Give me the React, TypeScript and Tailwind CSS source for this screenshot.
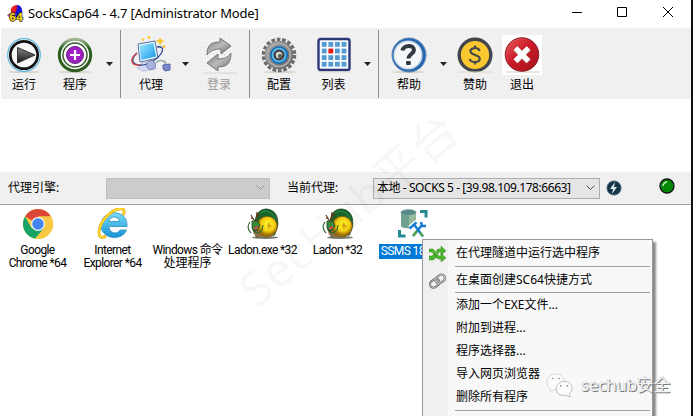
import type { ReactNode } from 'react';

const sans = "font-['Noto_Sans','Noto_Sans_CJK_SC',sans-serif]";
const narrow = "font-['Roboto','Noto_Sans_CJK_SC',sans-serif]";

function AppLogo() {
  return (
    <svg width="18" height="18" viewBox="0 0 18 18">
      <path d="M4 7C3 2 7 0 10 0v9H4Z" fill="#e91d1d" />
      <path d="M10 0c4 0 6 4 5 9l-3 6-6-6c3-1 4-4 4-9Z" fill="#1515d8" />
      <path d="M0 10 5 7l3 3-3 5Z" fill="#a04aa8" />
      <text x="2.5" y="15.5" fontSize="11" fontWeight="bold" fill="#f8dc16" stroke="#342d16" strokeWidth="1.4" paintOrder="stroke" fontFamily="Liberation Sans" textLength="13">64</text>
    </svg>
  );
}

function RunIcon() {
  return (
    <svg width="40" height="40" viewBox="0 0 40 40">
      <defs><linearGradient id="run" x2="0" y2="1"><stop stopColor="#888" /><stop offset="1" stopColor="#151515" /></linearGradient></defs>
      <ellipse cx="20" cy="37" rx="17" ry="1" fill="#d6d4c9" />
      <circle cx="20" cy="20" r="16.3" fill="#f4fbff" stroke="#65b5dc" strokeWidth="1.2" />
      <circle cx="20" cy="20" r="13.7" fill="#f8f8f8" stroke="#111" strokeWidth="2.7" />
      <path d="M13.5 12.5v15.5L31 20Z" fill="url(#run)" stroke="#333" />
    </svg>
  );
}

function AddIcon() {
  return (
    <svg width="40" height="40" viewBox="0 0 40 40">
      <defs><linearGradient id="green" x2="0" y2="1"><stop stopColor="#a3b795" /><stop offset=".3" stopColor="#245f16" /><stop offset="1" stopColor="#2d5d22" /></linearGradient></defs>
      <ellipse cx="20" cy="37" rx="17" ry="1" fill="#d6d4c9" />
      <circle cx="20" cy="20" r="15.7" fill="#fff" stroke="url(#green)" strokeWidth="3" />
      <circle cx="20" cy="20" r="12" fill="#fff" stroke="#355b2d" strokeWidth="1.5" />
      <circle cx="20" cy="20" r="8.5" fill="#9e20c4" stroke="#64207d" />
      <path d="M20 15v10m-5-5h10" stroke="#fff" strokeWidth="2.2" />
    </svg>
  );
}

function ProxyIcon() {
  return (
    <svg width="42" height="40" viewBox="0 0 42 40">
      <defs><linearGradient id="screen" x2="1" y2="1"><stop stopColor="#9de9ff" /><stop offset="1" stopColor="#1598e8" /></linearGradient></defs>
      <path d="m7 33 6-6 11 1 2 6-13 2Z" fill="#d3dbf2" stroke="#a4afd4" strokeWidth=".7" />
      <path d="M10 27 8 9 25 6l3 17Z" fill="#eefaff" stroke="#526da9" />
      <path d="M11 25 9.5 10.5 23.5 8l2.5 13.5Z" fill="url(#screen)" />
      <path d="M7 18C-4 28 8 34 21 27s15-17 6-15" fill="none" stroke="#30438d" strokeWidth="1.3" />
      <path d="M7 18C-2 25 2 31 10 30" fill="none" stroke="#d84443" strokeWidth="1.3" />
      <circle cx="21" cy="30" r="4.5" fill="#abb3dc" stroke="#7884ba" />
      <path d="M26 28c3-4 9-3 10 1" fill="none" stroke="#9ba8aa" strokeWidth="1.6" />
      <path d="m33 30 7-1v6l-5 1-2-2Z" fill="#7d88cc" stroke="#5966ad" />
      <path d="m30 3 1.5 2L34 6l-2.5 1L30 10l-1-3-3-1 3-1ZM19 1l1.5 1.5L19 4l-1.5-1.5ZM13 3l1 1.5L13 6l-1-1.5ZM34 10l1.5 1.5L34 13l-1.5-1.5Z" fill="#f7c51e" stroke="#f7c51e" strokeWidth=".5" />
    </svg>
  );
}

function LoginIcon() {
  return (
    <svg width="40" height="40" viewBox="0 0 40 40">
      <defs>
        <pattern id="dither" width="5" height="4" patternUnits="userSpaceOnUse"><path d="M0 0h1v1H0ZM3 2h1v1H3ZM1 3h1v1H1Z" fill="#e3e3e3" /></pattern>
        <linearGradient id="silver" x2="1" y2="1"><stop stopColor="#777" /><stop offset=".5" stopColor="#bbb" /><stop offset="1" stopColor="#5f5f5f" /></linearGradient>
      </defs>
      <rect width="40" height="40" fill="#f3f3f3" /><rect width="40" height="40" fill="url(#dither)" />
      <path d="M8 20C8 10 12 7 21 7V3l11 8-10 8v-5c-6 0-10 1-14 6Z" fill="url(#silver)" stroke="#777" />
      <path d="M32 18c0 10-4 14-13 14v4L8 28l11-9v5c6 0 9-1 13-6Z" fill="url(#silver)" stroke="#777" />
      <path d="M4 38h34" stroke="#d4d4d4" />
    </svg>
  );
}

function GearIcon() {
  return (
    <svg width="40" height="40" viewBox="0 0 40 40">
      <defs><linearGradient id="steel" x2="1" y2="1"><stop stopColor="#a8a8a8" /><stop offset="1" stopColor="#5f5f5f" /></linearGradient></defs>
      <ellipse cx="21" cy="37" rx="17" ry="1" fill="#d5d3c8" />
      <circle cx="20" cy="20" r="15.3" fill="none" stroke="#6d6d6d" strokeWidth="4" strokeDasharray="3.6 1.74" />
      <circle cx="20" cy="20" r="14.3" fill="url(#steel)" />
      <circle cx="20" cy="20" r="11.5" fill="none" stroke="#adadad" strokeWidth="1.6" />
      <circle cx="20" cy="20" r="8" fill="#444" stroke="#116fba" strokeWidth="2" />
      <circle cx="20" cy="20" r="6.5" fill="#4c5357" stroke="#5bc3fa" strokeWidth="1.5" />
      <circle cx="20" cy="20" r="4" fill="#d5d5d5" stroke="#292929" />
      <circle cx="21" cy="21" r="2" fill="#555" />
    </svg>
  );
}

function ListIcon() {
  return (
    <svg width="40" height="40" viewBox="0 0 40 40">
      <rect x="4.5" y="4" width="31" height="31" rx="2" fill="#f9fbff" stroke="#2c3778" strokeWidth="2.4" />
      {[0, 1, 2, 3].flatMap(y => [0, 1, 2, 3].map(x => (
        <rect key={`${x}-${y}`} x={7.8 + x * 6.6} y={7 + y * 6.6} width="4.8" height="4.8" fill={x === 1 && y === 1 ? '#ed1717' : '#539bd2'} />
      )))}
      <path d="M4 37h35" stroke="#dbd9cc" />
    </svg>
  );
}

function HelpIcon() {
  return (
    <svg width="40" height="40" viewBox="0 0 40 40">
      <ellipse cx="20" cy="37" rx="17" ry="1" fill="#d5d3c8" />
      <circle cx="20" cy="20" r="17" fill="#2866ae" stroke="#5689be" />
      <circle cx="19" cy="20" r="13.8" fill="#f6f8fa" stroke="#ccd9e6" strokeWidth="1.5" />
      <path d="M13.5 15.5c1-6 11.5-6 11.5-.5 0 4-5.5 4-5.5 8.5" fill="none" stroke="#313a41" strokeWidth="4" />
      <rect x="17" y="26" width="4.8" height="4" rx="1" fill="#303940" />
    </svg>
  );
}

function DonateIcon() {
  return (
    <svg width="40" height="40" viewBox="0 0 40 40">
      <circle cx="20" cy="20" r="15.8" fill="#fbc92f" stroke="#42454a" strokeWidth="3.4" />
      <path d="M24.5 16c-1-4.5-9-3.5-9 .3 0 4.4 9.2 3 9.2 7.4 0 4.3-8.7 4.5-10 .3M20 10.5v3m0 13v3" fill="none" stroke="#46494c" strokeWidth="2.2" />
      <path d="M3 37h35" stroke="#ded9c6" />
    </svg>
  );
}

function ExitIcon() {
  return (
    <svg width="40" height="40" viewBox="0 0 40 40">
      <defs><linearGradient id="red" x2="1" y2="1"><stop stopColor="#ed6161" /><stop offset=".45" stopColor="#ca1c28" /><stop offset="1" stopColor="#a4121c" /></linearGradient></defs>
      <rect width="40" height="40" fill="#fff" /><path d="M4 37h34" stroke="#d4d1c5" />
      <circle cx="20" cy="19.5" r="16.8" fill="url(#red)" stroke="#8c252d" />
      <path d="m13.5 13.5 13 13m0-13-13 13" stroke="#b9a5a5" strokeWidth="6" /><path d="m13.5 13 13 13m0-13-13 13" stroke="#fff" strokeWidth="5" />
    </svg>
  );
}

function Tool({ label, width = 'w-[46px]', muted = false, children }: { label: string; width?: string; muted?: boolean; children: ReactNode }) {
  return (
    <div className={`flex ${width} shrink-0 flex-col items-center pt-[7px]`}>
      {children}
      <span className={`mt-0.5 text-xs leading-4 ${muted ? 'text-[#9c9c9c]' : 'text-black'}`}>{label}</span>
    </div>
  );
}

function Arrow({ width }: { width: string }) {
  return <div className={`flex ${width} shrink-0 justify-center pt-[34px]`}><svg width="7" height="4"><path d="M0 0h7L3.5 4Z" fill="#222" /></svg></div>;
}

function Divider() {
  return <div className="mt-0.5 h-[68px] w-px shrink-0 bg-[#8d8d8d]" />;
}

function Chrome() {
  return (
    <svg width="32" height="32" viewBox="0 0 32 32">
      <circle cx="16" cy="16" r="15" fill="#fac944" />
      <path d="M16 16 3 8.5A15 15 0 0 1 29 8.5H16Z" fill="#dc4638" />
      <path d="M3 8.5a15 15 0 0 0 10 22.2L22.5 20H9.5Z" fill="#16a466" />
      <path d="M13 30.7A15 15 0 0 0 29 8.5H16l6.5 11Z" fill="#fac944" />
      <circle cx="16" cy="16" r="7" fill="#f3f4ed" /><circle cx="16" cy="16" r="5.7" fill="#4285ee" />
    </svg>
  );
}

function Explorer() {
  return (
    <svg width="32" height="32" viewBox="0 0 32 32">
      <defs><linearGradient id="ie" x2="0" y2="1"><stop stopColor="#7addfb" /><stop offset="1" stopColor="#1591d5" /></linearGradient></defs>
      <path fillRule="evenodd" d="M30 18.5H12c0 7.5 9 8 11 3.5h6.5C25 34 3.5 31 4 17 4.500 1 31 0 30 18.500ZM12 13.500h10.500c-.5-6-10-6-10.500 0Z" fill="url(#ie)" stroke="#2a8fbd" strokeWidth=".8" />
      <path d="M26 7C31-2 19-1 10 8 0 18-1 34 9 28" fill="none" stroke="#d69b09" strokeWidth="2.8" />
      <path d="M26 7C31-2 19-1 10 8 0 18-1 34 9 28" fill="none" stroke="#ffda2d" strokeWidth="1.8" />
    </svg>
  );
}

function Dragon() {
  return (
    <svg width="32" height="32" viewBox="0 0 32 32">
      <defs><radialGradient id="gold" cx=".55" cy=".4"><stop stopColor="#fff82a" /><stop offset=".65" stopColor="#f5cf12" /><stop offset="1" stopColor="#a17308" /></radialGradient></defs>
      <ellipse cx="18" cy="29.5" rx="13" ry="1.5" fill="#77776c" />
      <path d="M9 9C11 2 16 1 20 1c9 1 12 9 10.500 18l-3 8-18 2-4-8Z" fill="#17642a" stroke="#173c1d" strokeWidth=".7" />
      <path d="M12 6c5-5 13-3 16 5" fill="none" stroke="#329246" />
      <path d="m6 25 8-5 10 9H10Z" fill="#967044" />
      <circle cx="20" cy="18.500" r="10.300" fill="url(#gold)" stroke="#77580b" strokeWidth=".7" />
      <path d="M8 14 4 7m3 4-3-1m5 4 1-10m0 5 3-4" fill="none" stroke="#613d1c" strokeWidth="1.2" />
      <path d="m5 13 6 0 2 5-4 5-4-3Z" fill="#3c893b" stroke="#183e20" strokeWidth=".7" />
      <path d="M3 14c-3 4-2 8 1 11m4-1 3 1 4-3 1-5" fill="none" stroke="#326b2f" strokeWidth="1.2" />
      <path d="m7 21 4-2" stroke="#d65144" strokeWidth="2" />
      <path d="m20 17 2-3 1 3 3 1-3 1-1 3-1-3Z" fill="#d8a511" />
    </svg>
  );
}

function Database() {
  return (
    <svg width="32" height="32" viewBox="0 0 32 32">
      <path d="M4 4v14c0 3 15 3 15 0V4Z" fill="#70a293" />
      <ellipse cx="11.500" cy="4.500" rx="7.500" ry="2.800" fill="#568a86" stroke="#79a09d" />
      <path d="M12 7v13c4 0 7-1 7-2V5c-1 2-4 2-7 2Z" fill="#97b99d" />
      <path d="M23 3.500h6v6M2.500 22v6h6" fill="none" stroke="#258b91" strokeWidth="3" />
      <path d="m13 20 7-6M17 16l9 12m-10 0 9-11" fill="none" stroke="#fff" strokeWidth="5" />
      <path d="m12.500 20.500 7-6m-2.500 2 9 12" stroke="#187ecf" strokeWidth="2.400" />
      <path d="m16 28 9-11m-1-3 1 4h4" fill="none" stroke="#1979cd" strokeWidth="2.500" />
      <path d="m16 28 4-5m3 2 3 3" stroke="#55a83d" strokeWidth="2.200" />
    </svg>
  );
}

function Program({ width, icon, lines, active = false }: { width: string; icon?: ReactNode; lines: string[]; active?: boolean }) {
  return (
    <div className={`flex ${width} shrink-0 flex-col items-center pt-[3px] ${narrow}`}>
      <div className="h-8 w-8 shrink-0">{icon}</div>
      <div className={`mt-1 flex flex-col items-center whitespace-nowrap text-xs leading-[13px] ${active ? 'bg-[#0078d7] px-0.5 py-px text-white' : ''}`}>
        {lines.map(line => <span key={line} className={/[a-z]/i.test(line) ? 'tracking-[-.6px]' : ''}>{line}</span>)}
      </div>
    </div>
  );
}

function MenuRow({ children, icon, height = 'h-[23px]' }: { children: ReactNode; icon?: ReactNode; height?: string }) {
  return <div className={`flex ${height} items-center`}><div className="flex w-[33px] shrink-0 pl-[6px] pt-[2px]">{icon}</div><span className="whitespace-nowrap">{children}</span></div>;
}

function MenuLine() {
  return <div className="ml-8 mr-0.5 h-px bg-[#a0a0a0]" />;
}

function ShuffleIcon() {
  return (
    <svg width="17" height="16" viewBox="0 0 17 16"><path d="M0 3h4l6 7h2V7l5 5-5 4v-3H9L3 6H0ZM0 10h3l2-2 3 3-4 3H0ZM7 5l2-2h3V0l5 5-5 4V6h-2L9 8Z" fill="#4eb52d" stroke="#338a20" strokeWidth=".5" /></svg>
  );
}

function ChainIcon() {
  return (
    <svg width="18" height="16" viewBox="0 0 18 16"><g transform="rotate(-38 9 8)" fill="none"><rect x="0" y="4.3" width="10" height="7" rx="3.5" stroke="#686868" strokeWidth="2.2" /><rect x="7" y="4.3" width="10" height="7" rx="3.5" stroke="#777" strokeWidth="2.2" /><rect x="0" y="4.3" width="10" height="7" rx="3.5" stroke="#c6c6c6" strokeWidth=".8" /><rect x="7" y="4.3" width="10" height="7" rx="3.5" stroke="#d0d0d0" strokeWidth=".8" /></g></svg>
  );
}

function ContextMenu() {
  return (
    <div className="absolute left-[422px] top-[239px] h-[190px] w-[231px] border border-[#979797] bg-[linear-gradient(to_right,#f0f0f0_25px,#f8f8f8_25px)] text-xs shadow-[3px_3px_2px_rgba(0,0,0,.45)]">
      <MenuRow height="h-[26px]" icon={<ShuffleIcon />}>在代理隧道中运行选中程序</MenuRow>
      <MenuLine />
      <MenuRow height="h-[25px]" icon={<ChainIcon />}>在桌面创建SC64快捷方式</MenuRow>
      <MenuLine />
      <MenuRow>添加一个EXE文件...</MenuRow>
      <MenuRow>附加到进程...</MenuRow>
      <MenuRow>程序选择器...</MenuRow>
      <MenuRow>导入网页浏览器</MenuRow>
      <MenuRow>删除所有程序</MenuRow>
      <div className="h-0.5" />
      <MenuLine />
    </div>
  );
}

function WeChatMark() {
  return (
    <div className="absolute left-[546px] top-[371px] flex items-center whitespace-nowrap">
      <svg width="28" height="26" viewBox="0 0 30 28">
        <path d="M20 10C18-1 1 0 1 11c0 4 2 6 4 7l-1 4 5-3h4" fill="#fcfcfc" stroke="#ccc" strokeWidth=".8" />
        <path d="M28 18c0-11-17-10-17 0 0 6 6 8 10 7l5 2-1-4c2-1 3-3 3-5Z" fill="#fcfcfc" stroke="#aaa" strokeWidth=".8" />
        <g fill="#888"><circle cx="7" cy="7" r=".9" /><circle cx="14" cy="7" r=".9" /><circle cx="16" cy="15" r=".9" /><circle cx="23" cy="15" r=".9" /></g>
      </svg>
      <span className="ml-[7px] text-[17px] leading-7 tracking-[-.25px] text-[#f4f4f4] [text-shadow:1px_1px_0_#777,0_0_1px_#aaa]">sechub安全</span>
    </div>
  );
}

export default function App() {
  return (
    <div className={`relative flex h-[416px] w-[693px] overflow-hidden bg-white text-black ${sans}`}>
      <main className="flex w-[691px] shrink-0 flex-col">
        <header className="flex h-7 shrink-0 items-center pl-[7px]">
          <AppLogo />
          <h1 className="ml-[3px] mt-[-3px] w-[530px] whitespace-nowrap text-[13px] leading-6 tracking-[-.17px]">SocksCap64 - 4.7 [Administrator Mode]</h1>
          <svg className="ml-[14px] mt-[-4px]" width="102" height="12" fill="none" stroke="#000"><path d="M0 6.5h10M45.5 1.5h9v9h-9ZM91 1l10 10m0-10L91 11" /></svg>
        </header>
        <nav className="ml-px flex h-[71px] shrink-0 bg-[#f0f0f0]">
          <Tool label="运行"><RunIcon /></Tool>
          <Tool label="程序" width="w-[56px]"><AddIcon /></Tool>
          <Arrow width="w-[13px]" />
          <div className="w-1" />
          <Divider />
          <Tool label="代理" width="w-[60px]"><ProxyIcon /></Tool>
          <Arrow width="w-[8px]" />
          <Tool label="登录" width="w-[60px]" muted><LoginIcon /></Tool>
          <Divider />
          <Tool label="配置" width="w-[58px]"><GearIcon /></Tool>
          <Tool label="列表" width="w-[51px]"><ListIcon /></Tool>
          <Arrow width="w-[16px]" />
          <div className="w-[3px]" />
          <Divider />
          <Tool label="帮助" width="w-[60px]"><HelpIcon /></Tool>
          <Arrow width="w-[8px]" />
          <Tool label="赞助" width="w-[56px]"><DonateIcon /></Tool>
          <Tool label="退出" width="w-[38px]"><ExitIcon /></Tool>
        </nav>
        <div className="h-[73px] shrink-0" />
        <section className="flex h-[33px] shrink-0 items-center border-b border-[#a0a0a0] bg-[#f0f0f0] pl-2 text-xs">
          <span className="w-[98px]">代理引擎:</span>
          <div className="flex h-[21px] w-[164px] items-center justify-end border border-[#bfbfbf] bg-[#ccc] pr-1"><svg width="9" height="6" fill="none" stroke="#999"><path d="m.5.5 4 4 4-4" /></svg></div>
          <span className="ml-[17px] w-[86px]">当前代理:</span>
          <div className="flex h-[21px] w-[227px] items-center justify-between border border-[#adadad] bg-[#e5e5e5] pl-[3px] pr-1"><span className="whitespace-nowrap tracking-[-.43px]">本地 - SOCKS 5 - [39.98.109.178:6663]</span><svg width="9" height="6" fill="none" stroke="#555"><path d="m.5.5 4 4 4-4" /></svg></div>
          <svg className="ml-[6px]" width="16" height="16"><circle cx="8" cy="8" r="7" fill="#143446" stroke="#42616e" /><path d="M9 2 4 9h3l-1 5 5-7H8Z" fill="#ddebed" /></svg>
          <svg className="mb-1 ml-[37px]" width="16" height="16"><circle cx="8" cy="8" r="7" fill="#078707" stroke="#111" strokeWidth="1.3" /><path d="M4 8c0-2 2-4 4-4" fill="none" stroke="#c8f3c8" strokeWidth="1.4" /></svg>
        </section>
        <section className="flex flex-1 items-start">
          <Program width="w-[75px]" icon={<Chrome />} lines={['Google', 'Chrome *64']} />
          <Program width="w-[75px]" icon={<Explorer />} lines={['Internet', 'Explorer *64']} />
          <Program width="w-[75px]" lines={['Windows 命令', '处理程序']} />
          <Program width="w-[75px]" icon={<Dragon />} lines={['Ladon.exe *32']} />
          <Program width="w-[75px]" icon={<Dragon />} lines={['Ladon *32']} />
          <Program width="w-[75px]" icon={<Database />} lines={['SSMS 18.exe']} active />
        </section>
      </main>
      <div className="w-0.5 shrink-0 bg-[#111]" />
      <div className="absolute left-[349px] top-[209px] -translate-x-1/2 -translate-y-1/2 -rotate-[40deg] whitespace-nowrap text-[47px] leading-none tracking-[1px] text-black/[.05]">SecHub平台</div>
      <ContextMenu />
      <WeChatMark />
    </div>
  );
}
